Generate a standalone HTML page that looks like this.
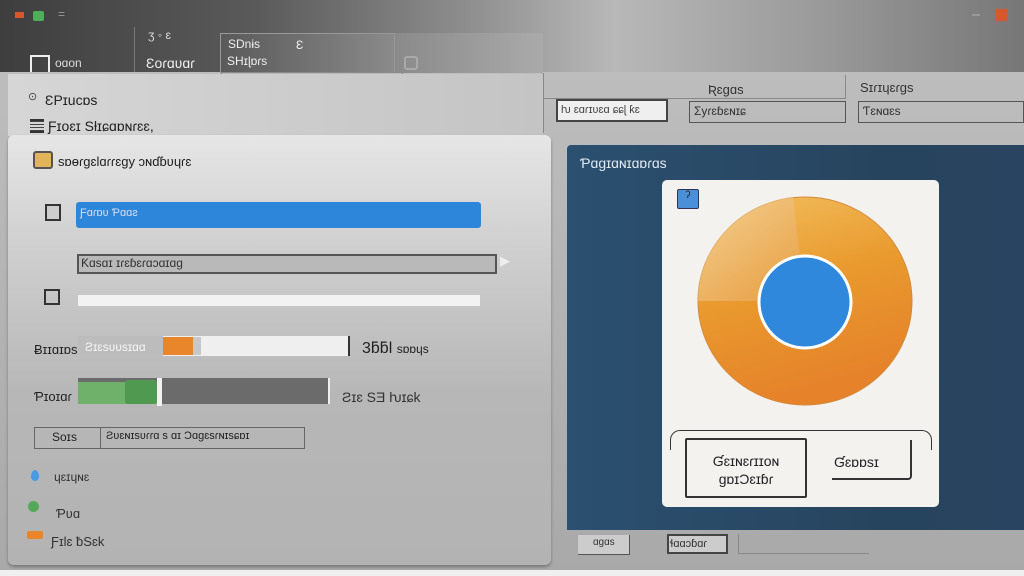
<!DOCTYPE html>
<html><head><meta charset="utf-8"><style>
*{margin:0;padding:0;box-sizing:border-box}
body{width:1024px;height:576px;overflow:hidden;position:relative;font-family:"Liberation Sans",sans-serif;background:#e8e8e8;color:#222}
.a{position:absolute}
.t{position:absolute;white-space:nowrap}
</style></head><body>
<!-- top bar -->
<div class="a" style="left:0;top:0;width:1024px;height:80px;background:linear-gradient(90deg,#3e3e3e 0%,#5a5a5a 25%,#8c8c8c 45%,#b8b8b8 60%,#9a9a9a 80%,#777 100%)"></div>
<div class="a" style="left:0;top:72px;width:1024px;height:500px;background:linear-gradient(180deg,#bdbdbd,#a9a9a9)"></div>
<div class="a" style="left:0;top:570px;width:1024px;height:6px;background:#f0f0f0"></div>
<div class="a" style="left:15px;top:12px;width:9px;height:6px;background:#d9572c"></div>
<div class="a" style="left:33px;top:11px;width:11px;height:10px;background:#4fae5a;border-radius:2px"></div>
<div class="t" style="left:58px;top:7px;color:#999;font-size:12px">=</div>
<div class="a" style="left:972px;top:14px;width:8px;height:2px;background:#999"></div>
<div class="a" style="left:996px;top:9px;width:11px;height:12px;background:#d9572c"></div>
<div class="a" style="left:30px;top:55px;width:20px;height:17px;border:2px solid #eee;border-bottom:none"></div>
<div class="t" style="left:55px;top:56px;font-size:12px;color:#ddd">oɑon</div>
<div class="a" style="left:134px;top:27px;width:1px;height:45px;background:#777"></div>
<div class="t" style="left:148px;top:28px;font-size:12px;color:#ddd">ʒ ◦ ɛ</div>
<div class="t" style="left:146px;top:55px;font-size:14px;color:#eee">Ɛoɾɑʋɑɾ</div>
<div class="a" style="left:220px;top:33px;width:175px;height:40px;background:linear-gradient(90deg,#5a5a5a,#8a8a8a);border:1px solid #999"></div>
<div class="t" style="left:228px;top:37px;font-size:12px;color:#eee">SDnɨs</div>
<div class="t" style="left:296px;top:38px;font-size:12px;color:#eee">Ɛ</div>
<div class="t" style="left:227px;top:54px;font-size:12px;color:#eee">SHɪɭɒɾs</div>
<div class="a" style="left:395px;top:33px;width:148px;height:40px;background:linear-gradient(90deg,#8a8a8a,#aaa)"></div>
<div class="a" style="left:404px;top:56px;width:14px;height:14px;border:2px solid #aaa;border-radius:3px"></div>
<!-- dropdown -->
<div class="a" style="left:221px;top:72px;width:182px;height:70px;background:#b9b9b9;border:1px solid #8a8a8a"></div>
<div class="t" style="left:228px;top:78px;font-size:12px;color:#333">⌐Ɵɪɛɔɾɴy rʃoɪ ɪnɛɾɪɗɛʋɛ</div>
<div class="a" style="left:226px;top:99px;width:106px;height:18px;border:1px solid #555"></div>
<div class="t" style="left:230px;top:102px;font-size:10px;color:#444">ɹ ɪʋɑɪɑ ɪ</div>
<div class="a" style="left:336px;top:99px;width:64px;height:18px;border:1px solid #888;background:#c4c4c4"></div>
<div class="t" style="left:342px;top:102px;font-size:11px;color:#666">Ƀɘɪɑɪɑɴɛ</div>
<div class="t" style="left:236px;top:123px;font-size:12px;color:#333">Aɑɾɑɴɡ ɑY Ɑɴɛɑɔɥʇɛ</div>
<!-- right toolbar -->
<div class="t" style="left:424px;top:76px;font-size:13px;color:#333">ƏlNɪɛɾ</div>
<div class="a" style="left:433px;top:100px;width:82px;height:18px;border:1px solid #666"></div>
<div class="t" style="left:444px;top:104px;font-size:10px;color:#333">Ƴɛs</div>
<div class="a" style="left:543px;top:73px;width:1px;height:60px;background:#888"></div>
<div class="a" style="left:544px;top:75px;width:302px;height:24px;border-right:1px solid #888;border-bottom:1px solid #888"></div>
<div class="a" style="left:556px;top:99px;width:112px;height:23px;border:2px solid #444;background:#efefef"></div>
<div class="t" style="left:561px;top:104px;font-size:11px;color:#444">ƕ ɛɑɾɪʋɛɑ ɕɕɭ ƙɛ</div>
<div class="t" style="left:708px;top:82px;font-size:13px;color:#333">Ʀɛɡɑs</div>
<div class="a" style="left:689px;top:101px;width:157px;height:22px;border:1px solid #555"></div>
<div class="t" style="left:694px;top:104px;font-size:12px;color:#333">Ʃyɾɛɓɛɴɪɕ</div>
<div class="t" style="left:860px;top:80px;font-size:13px;color:#333">Sɪɾɪɥɛɾɡs</div>
<div class="a" style="left:858px;top:101px;width:166px;height:22px;border:1px solid #555"></div>
<div class="t" style="left:863px;top:104px;font-size:12px;color:#333">Ƭɛɴɑɛs</div>
<!-- left panel -->
<div class="a" style="left:8px;top:74px;width:535px;height:62px;background:linear-gradient(90deg,#d6d6d6,#c4c4c4)"></div>
<div class="a" style="left:8px;top:135px;width:543px;height:430px;border-radius:6px;background:linear-gradient(180deg,#e6e6e6 0%,#d0d0d0 25%,#b7b7b7 60%,#b3b3b3 100%);box-shadow:0 2px 3px rgba(0,0,0,.3)"></div>
<div class="t" style="left:28px;top:90px;font-size:11px;color:#444">⊙</div>
<div class="t" style="left:45px;top:92px;font-size:14px;color:#222">ƐPɪucɒs</div>
<div class="a" style="left:30px;top:119px;width:14px;height:14px;border-top:2px solid #333;border-bottom:2px solid #333;background:repeating-linear-gradient(#444 0 1px,transparent 1px 3px)"></div>
<div class="t" style="left:48px;top:118px;font-size:14px;color:#222">Ƒɪoɛɪ Sƚɪɕɑɒɴɾɛɛ,</div>
<div class="a" style="left:33px;top:151px;width:20px;height:18px;background:#e2b45a;border:2px solid #555;border-radius:3px"></div>
<div class="t" style="left:58px;top:154px;font-size:13px;color:#222">sɒɵɾɡɛlɑɾɾɛɡy ɔɴɗɓʋɥɾɛ</div>
<div class="a" style="left:45px;top:204px;width:16px;height:17px;border:2px solid #333;background:#ccc"></div>
<div class="a" style="left:76px;top:202px;width:405px;height:26px;background:#2d86d9;border-radius:3px"></div>
<div class="t" style="left:80px;top:207px;font-size:11px;color:#dde">Ƒɑɾɒʋ Ƥɑɑƨ</div>
<div class="a" style="left:77px;top:254px;width:420px;height:20px;border:2px solid #555;background:#b9b9b9"></div>
<div class="t" style="left:81px;top:256px;font-size:12px;color:#333">Ƙɑsɑɪ ɪɾɛɓɛɾɑɔɑɪɑɡ</div>
<div class="t" style="left:500px;top:253px;font-size:13px;color:#eee">▶</div>
<div class="a" style="left:44px;top:289px;width:16px;height:16px;border:2px solid #333"></div>
<div class="a" style="left:78px;top:295px;width:402px;height:11px;background:#f2f2f2"></div>
<div class="t" style="left:34px;top:342px;font-size:13px;color:#222">Ƀɪɪɑɪɒs</div>
<div class="a" style="left:78px;top:336px;width:272px;height:20px;background:#efefef;border-right:2px solid #333"></div>
<div class="a" style="left:78px;top:336px;width:85px;height:20px;background:#bcbcbc"></div>
<div class="t" style="left:85px;top:340px;font-size:12px;color:#f6f6f6">Ƨɪɛsʋʋsɪɑɑ</div>
<div class="a" style="left:163px;top:337px;width:30px;height:18px;background:#e9862c"></div>
<div class="a" style="left:193px;top:337px;width:8px;height:18px;background:#c8c8c8"></div>
<div class="t" style="left:362px;top:340px;font-size:16px;color:#222">3ƃƃƖ <span style="font-size:12px">sɒɒɥs</span></div>
<div class="t" style="left:34px;top:389px;font-size:13px;color:#222">Ƥɪoɪɑɾ</div>
<div class="a" style="left:78px;top:378px;width:252px;height:26px;background:#6b6b6b;border-right:2px solid #eee"></div>
<div class="a" style="left:78px;top:382px;width:80px;height:22px;background:#6fb06a"></div>
<div class="a" style="left:125px;top:380px;width:32px;height:24px;background:#4f9a50;border-radius:3px"></div>
<div class="a" style="left:157px;top:378px;width:5px;height:28px;background:#f2f2f2"></div>
<div class="t" style="left:342px;top:389px;font-size:14px;color:#333">Ƨɪɛ SƎ ƕɪɕk</div>
<div class="a" style="left:34px;top:427px;width:271px;height:22px;border:1px solid #666"></div>
<div class="a" style="left:100px;top:427px;width:1px;height:22px;background:#666"></div>
<div class="t" style="left:52px;top:430px;font-size:12px;color:#222">Soɪs</div>
<div class="t" style="left:106px;top:430px;font-size:11px;color:#222">Ƨʋɛɴɪsʋɾɾɑ s ɑɪ Ɔɑɡɛsɾɴɪsɕɒɪ</div>
<div class="a" style="left:31px;top:470px;width:8px;height:11px;background:#4a9be0;border-radius:50% 50% 50% 50%/60% 60% 40% 40%"></div>
<div class="t" style="left:54px;top:470px;font-size:12px;color:#333">ɥɛɪɥɴɛ</div>
<div class="a" style="left:28px;top:501px;width:11px;height:11px;background:#55a85a;border-radius:50%"></div>
<div class="t" style="left:56px;top:506px;font-size:13px;color:#333">Ƥʋɑ</div>
<div class="a" style="left:27px;top:531px;width:16px;height:8px;background:#e9862c;border-radius:2px"></div>
<div class="t" style="left:51px;top:534px;font-size:13px;color:#333">Ƒɪlɛ ƀSɛk</div>
<!-- right blue panel -->
<div class="a" style="left:567px;top:145px;width:457px;height:385px;background:linear-gradient(90deg,#2b5070,#27445e 70%,#284460);border-radius:4px 0 0 0"></div>
<div class="t" style="left:580px;top:155px;font-size:14px;color:#dfe8f0">Ƥɑɡɪɑɴɪɑɒɾɑs</div>
<div class="a" style="left:662px;top:180px;width:277px;height:327px;background:#f3f2ef;border-radius:5px"></div>
<div class="a" style="left:677px;top:189px;width:22px;height:20px;background:#4a90d8;border:1px solid #335;border-radius:2px;color:#222;font-size:10px;text-align:center">ʔ</div>
<svg class="a" style="left:695px;top:194px" width="220" height="214" viewBox="0 0 220 214">
<defs><linearGradient id="g" x1="0" y1="0" x2="0.3" y2="1"><stop offset="0" stop-color="#f2c060"/><stop offset="0.5" stop-color="#e99a2e"/><stop offset="1" stop-color="#e5822a"/></linearGradient>
<linearGradient id="g2" x1="0" y1="0" x2="1" y2="1"><stop offset="0" stop-color="#f3d8a8"/><stop offset="1" stop-color="#e7a048"/></linearGradient></defs>
<ellipse cx="110" cy="107" rx="107" ry="104" fill="url(#g)" stroke="#d58a3a"/>
<path d="M110 107 L98 3 A107 104 0 0 0 3 107 Z" fill="url(#g2)" opacity=".7"/>
<path d="M110 107 L98 3 A107 104 0 0 0 3 107 Z" fill="none"/>
<circle cx="110" cy="108" r="46" fill="#2f88dc" stroke="#fff" stroke-width="3"/>
</svg>
<div class="a" style="left:670px;top:430px;width:262px;height:20px;border:1px solid #333;border-bottom:none;border-radius:10px 10px 0 0"></div>
<div class="a" style="left:685px;top:438px;width:122px;height:60px;border:2px solid #333;background:#f3f2ef;border-radius:2px"></div>
<div class="t" style="left:685px;top:452px;width:122px;text-align:center;font-size:14px;line-height:18px;color:#222;white-space:normal">Ɠɛɪɴɛɾɪɪoɴ ɡɒɪƆɛɪɓɾ</div>
<div class="a" style="left:832px;top:440px;width:80px;height:40px;border-right:2px solid #333;border-bottom:2px solid #333;border-radius:0 0 4px 0"></div>
<div class="t" style="left:834px;top:454px;font-size:14px;color:#222">Ɠɛɒɒsɪ</div>
<!-- bottom tabs -->
<div class="a" style="left:578px;top:535px;width:52px;height:20px;border:1px solid #555;border-top:none;border-left:none;background:#ccc"></div>
<div class="t" style="left:593px;top:537px;font-size:10px;color:#333">ɑɡɑs</div>
<div class="a" style="left:667px;top:534px;width:61px;height:20px;border:2px solid #444;background:#ccc"></div>
<div class="t" style="left:670px;top:538px;font-size:11px;color:#333">ɬɑɑɔɓɑɾ</div>
<div class="a" style="left:738px;top:534px;width:1px;height:20px;background:#888"></div>
<div class="a" style="left:739px;top:553px;width:130px;height:1px;background:#888"></div>
</body></html>
